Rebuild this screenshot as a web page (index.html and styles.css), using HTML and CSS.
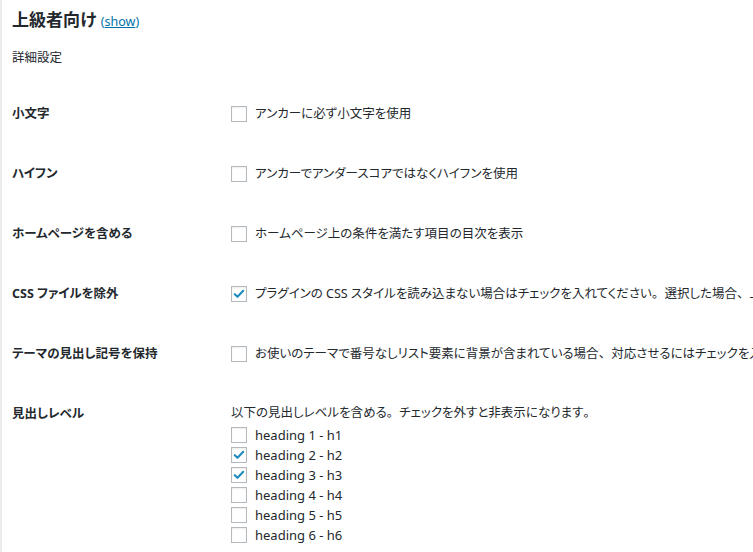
FILE: index.html
```html
<!DOCTYPE html>
<html lang="ja">
<head>
<meta charset="utf-8">
<title>上級者向け</title>
<link rel="stylesheet" href="styles.css">
</head>
<body>
<div class="page">
  <h2 class="title">上級者向け <a class="show" href="#">(<span class="u">show</span>)</a></h2>
  <p class="sub">詳細設定</p>

  <div class="row">
    <div class="label">小文字</div>
    <div class="field"><label class="opt"><span class="cb"></span>アンカーに必ず小文字を使用</label></div>
  </div>
  <div class="row">
    <div class="label">ハイフン</div>
    <div class="field"><label class="opt"><span class="cb"></span>アンカーでアンダースコアではなくハイフンを使用</label></div>
  </div>
  <div class="row">
    <div class="label">ホームページを含める</div>
    <div class="field"><label class="opt"><span class="cb"></span>ホームページ上の条件を満たす項目の目次を表示</label></div>
  </div>
  <div class="row">
    <div class="label">CSS ファイルを除外</div>
    <div class="field"><label class="opt"><span class="cb on"><svg viewBox="0 0 16 16"><path d="M3.2 8.2 L6.3 11.2 L12.8 4.4" /></svg></span><span class="txt">プラグインの CSS スタイルを読み込まない場合はチェックを入れてください<span class="fw">。</span>選択した場合<span class="fw">、</span>上記の設定は適用されません<span class="fw">。</span></span></label></div>
  </div>
  <div class="row">
    <div class="label">テーマの見出し記号を保持</div>
    <div class="field"><label class="opt"><span class="cb"></span><span class="txt">お使いのテーマで番号なしリスト要素に背景が含まれている場合<span class="fw">、</span>対応させるにはチェックを入れてください<span class="fw">。</span></span></label></div>
  </div>
  <div class="row last">
    <div class="label">見出しレベル</div>
    <div class="field">
      <div class="desc">以下の見出しレベルを含める<span class="fw">。</span>チェックを外すと非表示になります<span class="fw">。</span></div>
      <ul class="levels">
        <li><span class="cb"></span>heading 1 - h1</li>
        <li><span class="cb on"><svg viewBox="0 0 16 16"><path d="M3.2 8.2 L6.3 11.2 L12.8 4.4" /></svg></span>heading 2 - h2</li>
        <li><span class="cb on"><svg viewBox="0 0 16 16"><path d="M3.2 8.2 L6.3 11.2 L12.8 4.4" /></svg></span>heading 3 - h3</li>
        <li><span class="cb"></span>heading 4 - h4</li>
        <li><span class="cb"></span>heading 5 - h5</li>
        <li><span class="cb"></span>heading 6 - h6</li>
      </ul>
    </div>
  </div>
</div>
</body>
</html>
```

FILE: styles.css
```css
html, body {
  margin: 0;
  padding: 0;
  background: #fff;
  overflow: hidden;
}
body {
  border-left: 2px solid #ececec;
  height: 552px;
  box-sizing: border-box;
  font-family: "Noto Sans", "Noto Sans CJK JP", sans-serif;
  font-feature-settings: "palt";
  color: #23282d;
  font-size: 12.5px;
}
.page {
  padding-left: 10px;
  white-space: nowrap;
}
.title {
  margin: 8px 0 0;
  font-size: 17px;
  line-height: 24px;
  font-weight: 700;
  color: #23282d;
}
.show {
  font-size: 12.5px;
  font-weight: 400;
  color: #0073aa;
  text-decoration: none;
}
.show .u {
  text-decoration: underline;
}
.sub {
  margin: 14px 0 0;
  line-height: 20px;
  font-size: 12.5px;
}
.sub + .row {
  margin-top: 16px;
}
.row {
  display: grid;
  grid-template-columns: 219px 1fr;
  height: 60px;
  padding-top: 20px;
  box-sizing: border-box;
}
.row.last {
  height: auto;
}
.label {
  font-size: 12.5px;
  font-weight: 700;
  line-height: 20px;
}
.field {
  font-size: 12.5px;
  line-height: 20px;
  min-width: 0;
}
.opt {
  display: flex;
  align-items: center;
  gap: 8px;
}
.fw {
  font-feature-settings: normal;
}
.cb {
  flex: none;
  width: 16px;
  height: 16px;
  box-sizing: border-box;
  border: 1px solid #b4b9be;
  background: #fff;
  box-shadow: inset 0 1px 2px rgba(0,0,0,0.07);
  display: inline-flex;
  align-items: center;
  justify-content: center;
}
.cb svg {
  width: 14px;
  height: 14px;
  fill: none;
  stroke: #1e8cbe;
  stroke-width: 2.4;
  stroke-linecap: round;
  stroke-linejoin: round;
}
.desc {
  line-height: 20px;
  margin-top: -1px;
}
.levels {
  list-style: none;
  margin: 2px 0 0;
  padding: 0;
}
.levels li {
  display: flex;
  align-items: center;
  gap: 8px;
  height: 20px;
  font-size: 13px;
}
```
